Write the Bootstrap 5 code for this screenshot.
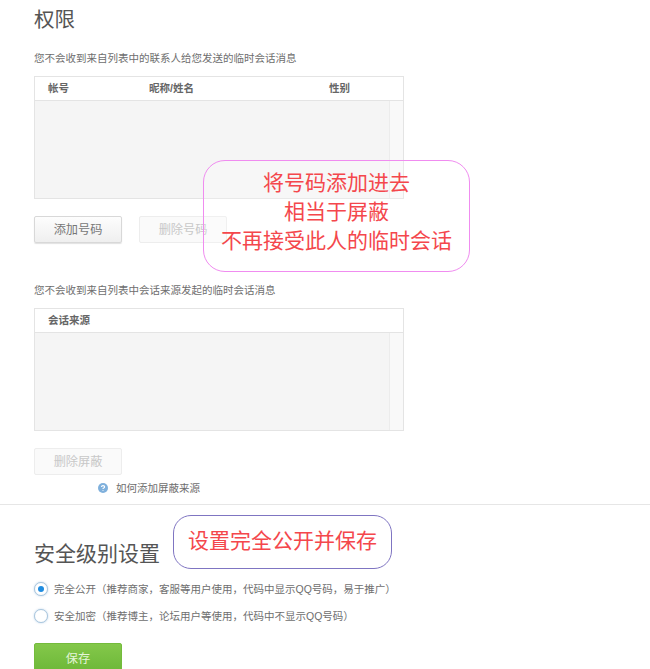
<!DOCTYPE html>
<html lang="zh-CN">
<head>
    <meta charset="UTF-8">
    <meta name="viewport" content="width=device-width, initial-scale=1.0">
    <title>权限</title>
    <link href="https://cdn.jsdelivr.net/npm/bootstrap@5.3.0/dist/css/bootstrap.min.css" rel="stylesheet">
    <style>
        body {
            font-family: "Liberation Sans", "Noto Sans CJK SC", sans-serif;
            color: #666;
            background: #fff;
            overflow: hidden;
        }
        .page-wrap {
            position: relative;
            height: 669px;
            overflow: hidden;
        }
        .block-top { padding: 7px 0 0 34px; }
        .block-bottom { padding: 34px 0 0 34px; }
        .page-title {
            font-size: 20.5px;
            line-height: 26px;
            font-weight: 400;
            color: #555;
            margin: 0;
        }
        .tip-text {
            font-size: 10.5px;
            line-height: 14px;
            color: #6e6e6e;
            margin: 0;
        }
        .tip-first { margin-top: 18px; }
        .tip-second { margin-top: 40px; }
        .list-box {
            width: 370px;
            height: 123px;
            margin-top: 11px;
            border: 1px solid #e4e4e4;
            display: flex;
            flex-direction: column;
        }
        .list-head {
            height: 24px;
            flex: none;
            background: #fff;
            border-bottom: 1px solid #e4e4e4;
            font-size: 10.5px;
            font-weight: 700;
            color: #666;
            line-height: 23px;
            display: flex;
        }
        .list-body {
            flex: 1;
            display: flex;
            background: #f5f5f5;
        }
        .list-fill { flex: 1; border-right: 1px solid #ececec; }
        .list-scroll { width: 13px; background: #f9f9f9; }
        .col-account { width: 114px; padding-left: 13px; }
        .col-name { width: 180px; }
        .btn-row { gap: 17px; margin-top: 17px; }
        .btn-qq {
            width: 88px;
            height: 27px;
            padding: 2px 0 0;
            font-size: 12.2px;
            line-height: 23px;
            border-radius: 2px;
            border: 1px solid #d8d8d8;
            color: #777;
            background: linear-gradient(#fdfdfd, #efefef);
            box-shadow: 0 1px 1px rgba(0, 0, 0, .12);
        }
        .btn-qq:disabled {
            opacity: 1;
            color: #c8c8c8;
            border-color: #ededed;
            background: #fafafa;
            box-shadow: none;
        }
        .btn-save {
            height: 30px;
            margin-top: 19px;
            color: #e4f5d8;
            border-color: #74bb3c;
            background: linear-gradient(#84c84a, #6cb738);
            box-shadow: none;
        }
        .help-line { padding-left: 64px; height: 16px; gap: 8px; margin-top: 5px; }
        .help-line .tip-text { line-height: 16px; }
        .radio-row { gap: 6px; height: 16px; }
        .radio-first { margin-top: 12px; }
        .radio-second { margin-top: 11px; }
        .radio-dot {
            width: 14px;
            height: 14px;
            flex: none;
            border-radius: 50%;
            border: 1px solid #a9c6dd;
            background: #fff;
            box-shadow: 0 0 2px rgba(110, 160, 210, .5);
            display: flex;
            align-items: center;
            justify-content: center;
        }
        .radio-dot.is-on::after {
            content: "";
            width: 6px;
            height: 6px;
            border-radius: 50%;
            background: #1f8ce0;
        }
        .note-box {
            position: absolute;
            color: #f4474c;
            font-size: 21px;
            text-align: center;
            background: rgba(255, 255, 255, .2);
        }
        .note-pink {
            left: 203px;
            top: 160px;
            width: 267px;
            height: 112px;
            border: 1.5px solid #f08cf0;
            border-radius: 22px;
            line-height: 29px;
            padding-top: 7px;
        }
        .note-blue {
            left: 173px;
            top: 515px;
            width: 219px;
            height: 54px;
            border: 1.5px solid #7f75c2;
            border-radius: 18px;
            line-height: 50px;
        }
        .title-wide { font-size: 21px; line-height: 30px; }
        .rule-line { height: 1px; background: #e6e6e6; margin-top: 8px; }
    </style>
</head>
<body>
    <div class="page-wrap">
        <div class="block-top">
            <h2 class="page-title">权限</h2>
            <p class="tip-text tip-first">您不会收到来自列表中的联系人给您发送的临时会话消息</p>
            <div class="list-box">
                <div class="list-head">
                    <div class="col-account">帐号</div>
                    <div class="col-name">昵称/姓名</div>
                    <div>性别</div>
                </div>
                <div class="list-body">
                    <div class="list-fill"></div>
                    <div class="list-scroll"></div>
                </div>
            </div>
            <div class="d-flex btn-row">
                <button type="button" class="btn btn-qq">添加号码</button>
                <button type="button" class="btn btn-qq" disabled>删除号码</button>
            </div>
            <p class="tip-text tip-second">您不会收到来自列表中会话来源发起的临时会话消息</p>
            <div class="list-box">
                <div class="list-head">
                    <div class="col-account">会话来源</div>
                </div>
                <div class="list-body">
                    <div class="list-fill"></div>
                    <div class="list-scroll"></div>
                </div>
            </div>
            <div class="d-flex btn-row">
                <button type="button" class="btn btn-qq" disabled>删除屏蔽</button>
            </div>
            <div class="help-line d-flex align-items-center">
                <svg width="10" height="10" viewBox="0 0 10 10">
                    <circle cx="5" cy="5" r="5" fill="#7fb0dc"/>
                    <path d="M3.4 4 Q3.6 2.6 5 2.6 Q6.6 2.6 6.6 3.9 Q6.6 4.7 5.6 5.1 Q5 5.4 5 6 M5 6.9 V7.7" fill="none" stroke="#fff" stroke-width="1.1"/>
                </svg>
                <p class="tip-text">如何添加屏蔽来源</p>
            </div>
        </div>
        <div class="rule-line"></div>
        <div class="block-bottom">
            <h2 class="page-title title-wide">安全级别设置</h2>
            <div class="d-flex align-items-center radio-row radio-first">
                <span class="radio-dot is-on"></span>
                <p class="tip-text">完全公开（推荐商家，客服等用户使用，代码中显示QQ号码，易于推广）</p>
            </div>
            <div class="d-flex align-items-center radio-row radio-second">
                <span class="radio-dot"></span>
                <p class="tip-text">安全加密（推荐博主，论坛用户等使用，代码中不显示QQ号码）</p>
            </div>
            <button type="button" class="btn btn-qq btn-save">保存</button>
        </div>
        <div class="note-box note-pink">将号码添加进去<br>相当于屏蔽<br>不再接受此人的临时会话</div>
        <div class="note-box note-blue">设置完全公开并保存</div>
    </div>
    <script src="https://cdn.jsdelivr.net/npm/bootstrap@5.3.0/dist/js/bootstrap.bundle.min.js"></script>
</body>
</html>
